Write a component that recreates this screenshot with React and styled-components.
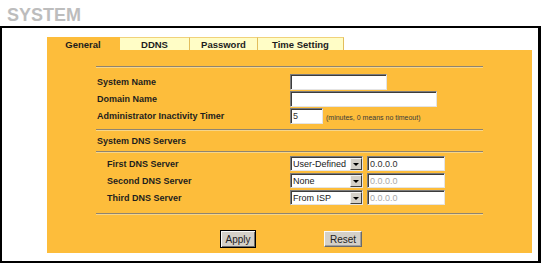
import React from "react";
import styled, { createGlobalStyle } from "styled-components";

const GlobalStyle = createGlobalStyle`
  html, body {
    margin: 0;
    padding: 0;
    background: #fff;
  }
  body {
    font-family: "Liberation Sans", Arial, sans-serif;
  }
`;

const ORANGE = "#fdbd3b";

const Page = styled.div`
  width: 541px;
  height: 264px;
  display: flex;
  flex-direction: column;
  padding-bottom: 1px;
  box-sizing: border-box;
`;

const PageTitle = styled.h1`
  margin: 0;
  height: 26px;
  box-sizing: border-box;
  padding: 5px 0 0 7px;
  font-size: 18px;
  line-height: 20px;
  font-weight: bold;
  color: #bdbdbd;
`;

const Frame = styled.div`
  flex: 1;
  display: flex;
  border: 2px solid #000;
  border-right-width: 3px;
  padding: 9px 6px 8px 45px;
`;

const Panel = styled.div`
  flex: 1;
  display: flex;
  flex-direction: column;
`;

const TabBar = styled.div`
  display: flex;
  height: 13px;
`;

const Tab = styled.div`
  width: ${props => props.$width}px;
  box-sizing: border-box;
  display: flex;
  align-items: center;
  justify-content: center;
  font-size: 9.5px;
  font-weight: bold;
  color: #1c1c1c;
  background: ${props => (props.$active ? ORANGE : "#fffdc6")};
  border-top: 1px solid ${props => (props.$active ? ORANGE : "#f0d27a")};
  border-right: 1px solid ${props => (props.$active ? ORANGE : "#e2bd5c")};
  padding-top: 1px;
`;

const Body = styled.div`
  flex: 1;
  background: ${ORANGE};
  padding: 16px 49px 0 49px;
`;

const Rule = styled.div`
  height: 0;
  border-top: 1px solid #8f8470;
  border-bottom: 1px solid #f6d58a;
  margin: ${props => props.$margin || "0"};
`;

const Section = styled.div`
  display: flex;
  flex-direction: column;
  gap: ${props => props.$gap}px;
`;

const Row = styled.div`
  display: flex;
  align-items: center;
  height: ${props => props.$height}px;
`;

const Label = styled.span`
  width: 194px;
  box-sizing: border-box;
  padding-left: ${props => (props.$indent ? 11 : 1)}px;
  font-size: 9px;
  font-weight: bold;
  color: #1e1e1e;
  white-space: nowrap;
`;

const SectionTitle = styled.div`
  height: 20px;
  display: flex;
  align-items: center;
  padding-left: 1px;
  font-size: 9px;
  font-weight: bold;
  color: #1e1e1e;
`;

const TextField = styled.input`
  width: ${props => props.$width}px;
  height: ${props => props.$height || 16}px;
  box-sizing: border-box;
  margin: 0;
  padding: 0 0 0 2px;
  font-family: "Liberation Sans", Arial, sans-serif;
  font-size: 9px;
  color: ${props => (props.disabled ? "#a8a8a8" : "#303030")};
  background: #fff;
  border: 1px solid;
  border-color: #7c7c7c #e4e4e4 #e4e4e4 #7c7c7c;
  box-shadow: inset 1px 1px 0 #3c3c3c;
  outline: none;
`;

const Hint = styled.span`
  margin-left: 3px;
  font-size: 7px;
  color: #3a3a3a;
  padding-top: 2px;
`;

const Dropdown = styled.div`
  width: 73px;
  height: 15px;
  box-sizing: border-box;
  display: flex;
  background: #fff;
  border: 1px solid;
  border-color: #7c7c7c #e4e4e4 #e4e4e4 #7c7c7c;
  box-shadow: inset 1px 1px 0 #3c3c3c;
  margin-right: 4px;
`;

const DropdownText = styled.span`
  flex: 1;
  padding-left: 2px;
  padding-top: 1px;
  font-size: 9px;
  line-height: 12px;
  color: #202020;
  white-space: nowrap;
`;

const DropdownButton = styled.span`
  width: 12px;
  margin: 1px 0 0 0;
  box-sizing: border-box;
  display: flex;
  align-items: center;
  justify-content: center;
  background: #d4d0c8;
  border: 1px solid;
  border-color: #f4f4f4 #404040 #404040 #f4f4f4;
  &::after {
    content: "";
    border-left: 3px solid transparent;
    border-right: 3px solid transparent;
    border-top: 3px solid #000;
  }
`;

const ButtonRow = styled.div`
  display: flex;
  justify-content: center;
  align-items: center;
  gap: 68px;
  padding-left: 3px;
  margin-top: 15px;
`;

const Button = styled.button`
  width: ${props => props.$width}px;
  height: ${props => (props.$default ? 18 : 16)}px;
  box-sizing: border-box;
  margin: 0;
  padding: 0;
  font-family: "Liberation Sans", Arial, sans-serif;
  font-size: 10px;
  color: #222;
  background: #d4d0c8;
  border: 1px solid;
  border-color: ${props =>
    props.$default ? "#000" : "#fafafa #6a6a6a #6a6a6a #fafafa"};
  box-shadow: ${props =>
    props.$default
      ? "inset 1px 1px 0 #fafafa, inset -1px -1px 0 #6a6a6a"
      : "inset -1px -1px 0 #a0a0a0"};
`;

const tabs = [
  { label: "General", width: 73, active: true },
  { label: "DDNS", width: 70 },
  { label: "Password", width: 68 },
  { label: "Time Setting", width: 86 }
];

const dnsServers = [
  { label: "First DNS Server", mode: "User-Defined", ip: "0.0.0.0", enabled: true },
  { label: "Second DNS Server", mode: "None", ip: "0.0.0.0" },
  { label: "Third DNS Server", mode: "From ISP", ip: "0.0.0.0" }
];

export default function App() {
  return (
    <Page>
      <GlobalStyle />
      <PageTitle>SYSTEM</PageTitle>
      <Frame>
        <Panel>
          <TabBar>
            {tabs.map(tab => (
              <Tab key={tab.label} $width={tab.width} $active={tab.active}>
                {tab.label}
              </Tab>
            ))}
          </TabBar>
          <Body>
            <Rule $margin="0 0 6px 0" />
            <Section $gap={1}>
              <Row $height={16}>
                <Label>System Name</Label>
                <TextField $width={97} defaultValue="" />
              </Row>
              <Row $height={16}>
                <Label>Domain Name</Label>
                <TextField $width={147} defaultValue="" />
              </Row>
              <Row $height={16}>
                <Label>Administrator Inactivity Timer</Label>
                <TextField $width={33} defaultValue="5" />
                <Hint>(minutes, 0 means no timeout)</Hint>
              </Row>
            </Section>
            <Rule $margin="5px 0 0 0" />
            <SectionTitle>System DNS Servers</SectionTitle>
            <Rule $margin="0 0 3px 0" />
            <Section $gap={2}>
              {dnsServers.map(server => (
                <Row key={server.label} $height={15}>
                  <Label $indent>{server.label}</Label>
                  <Dropdown>
                    <DropdownText>{server.mode}</DropdownText>
                    <DropdownButton />
                  </Dropdown>
                  <TextField
                    $width={78}
                    $height={15}
                    defaultValue={server.ip}
                    disabled={!server.enabled}
                  />
                </Row>
              ))}
            </Section>
            <Rule $margin="8px 0 0 0" />
            <ButtonRow>
              <Button $width={36} $default>
                Apply
              </Button>
              <Button $width={38}>Reset</Button>
            </ButtonRow>
          </Body>
        </Panel>
      </Frame>
    </Page>
  );
}
